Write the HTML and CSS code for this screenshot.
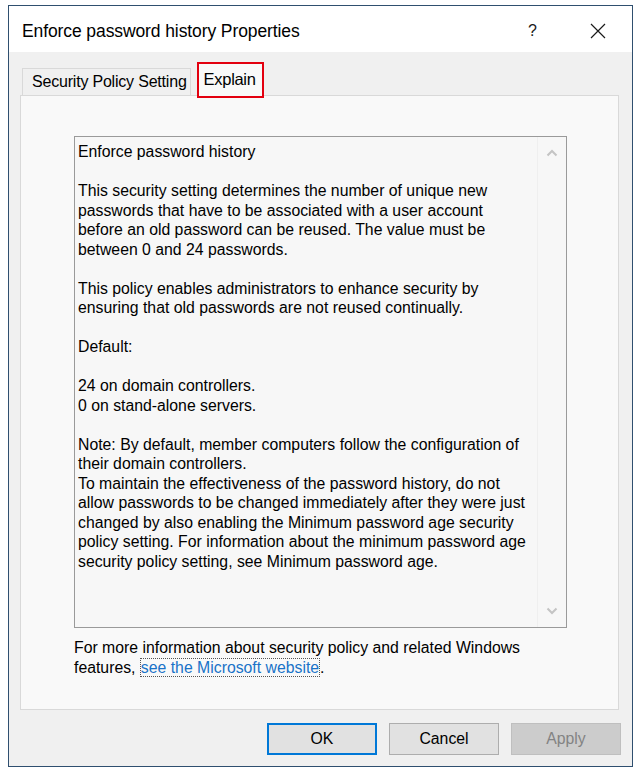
FILE: index.html
```html
<!DOCTYPE html>
<html>
<head>
<meta charset="utf-8">
<title>Enforce password history Properties</title>
<link rel="stylesheet" href="styles.css">
</head>
<body>
<div class="window">
  <div class="titlebar">
    <span class="title">Enforce password history Properties</span>
    <span class="help">?</span>
    <span class="close">
      <svg width="16" height="16" viewBox="0 0 16 16"><path d="M1 1 L15 15 M15 1 L1 15" stroke="#1a1a1a" stroke-width="1.2" fill="none"/></svg>
    </span>
  </div>
  <div class="client">
    <div class="tabstrip">
      <div class="tab">Security Policy Setting</div>
      <div class="tab active">Explain</div>
    </div>
    <div class="panel">
      <div class="textbox">
        <div class="text">
          <p>Enforce password history</p>
          <p>This security setting determines the number of unique new passwords that have to be associated with a user account before an old password can be reused. The value must be between 0 and 24 passwords.</p>
          <p>This policy enables administrators to enhance security by ensuring that old passwords are not reused continually.</p>
          <p>Default:</p>
          <p>24 on domain controllers.<br>0 on stand-alone servers.</p>
          <p>Note: By default, member computers follow the configuration of their domain controllers.<br>To maintain the effectiveness of the password history, do not allow passwords to be changed immediately after they were just changed by also enabling the Minimum password age security policy setting. For information about the minimum password age security policy setting, see Minimum password age.</p>
        </div>
        <div class="scrollbar">
          <svg class="arrow" width="12" height="8" viewBox="0 0 12 8"><path d="M1.5 6.5 L6 2 L10.5 6.5" stroke="#c4c4c4" stroke-width="2" fill="none"/></svg>
          <svg class="arrow" width="12" height="8" viewBox="0 0 12 8"><path d="M1.5 1.5 L6 6 L10.5 1.5" stroke="#c4c4c4" stroke-width="2" fill="none"/></svg>
        </div>
      </div>
      <p class="more">For more information about security policy and related Windows features, <a class="link" href="#">see the Microsoft website</a>.</p>
    </div>
    <div class="buttons">
      <button class="btn default">OK</button>
      <button class="btn">Cancel</button>
      <button class="btn disabled">Apply</button>
    </div>
  </div>
</div>
</body>
</html>
```

FILE: styles.css
```css
html, body {
  margin: 0;
  padding: 0;
  background: #ffffff;
}

body {
  font-family: "Liberation Sans", Arial, sans-serif;
  color: #000;
}

.window {
  margin: 5px 0 0 8px;
  width: 625px;
  height: 762px;
  box-sizing: border-box;
  border: 1px solid #2f4f6f;
  background: #f0f0f0;
  display: flex;
  flex-direction: column;
}

.titlebar {
  height: 46px;
  box-sizing: border-box;
  background: #ffffff;
  display: flex;
  align-items: center;
  padding: 4px 0 0 13px;
  flex: none;
}

.title {
  font-size: 17.5px;
  color: #000;
  flex: 1;
  letter-spacing: -0.1px;
}

.help {
  font-size: 16px;
  color: #1a1a1a;
  width: 20px;
  margin-right: 42px;
}

.close {
  display: flex;
  margin-right: 26px;
}

.client {
  flex: 1;
  display: flex;
  flex-direction: column;
  padding: 10px 13px 0 11px;
}

.tabstrip {
  display: flex;
  align-items: flex-end;
  height: 33px;
  gap: 6px;
  position: relative;
  z-index: 2;
}

.tab {
  height: 27px;
  box-sizing: border-box;
  border: 1px solid #d9d9d9;
  border-bottom: none;
  background: #f0f0f0;
  font-size: 16px;
  display: flex;
  align-items: center;
  padding: 0 3px 0 9px;
  letter-spacing: -0.2px;
  margin-left: 2px;
}

.tab.active {
  height: 36px;
  width: 67px;
  margin-left: 0;
  margin-bottom: -3px;
  border: 2px solid #e3000f;
  background: #f9f9f9;
  padding: 0 0 2px 5px;
  font-size: 16.5px;
  letter-spacing: -0.3px;
}

.panel {
  height: 615px;
  box-sizing: border-box;
  border: 1px solid #d9d9d9;
  background: #f9f9f9;
  padding: 40px 0 0 53px;
  position: relative;
  z-index: 1;
}

.textbox {
  width: 493px;
  height: 492px;
  box-sizing: border-box;
  border: 1px solid #9a9a9a;
  background: #f7f7f7;
  display: flex;
}

.text {
  flex: 1;
  padding: 5px 8px 0 3px;
  font-size: 15.8px;
  line-height: 19.5px;
}

.text p {
  margin: 0 0 19.5px 0;
}

.scrollbar {
  width: 28px;
  border-left: 1px solid #efefef;
  display: flex;
  flex-direction: column;
  align-items: center;
  justify-content: space-between;
  padding: 12px 0 12px 0;
}

.more {
  margin: 10px 0 0 0;
  font-size: 15.8px;
  line-height: 20px;
  width: 470px;
}

.link {
  color: #1a73c8;
  text-decoration: none;
  outline: 1px dotted #555;
  outline-offset: 0;
  margin: 0 1px;
}

.buttons {
  display: flex;
  justify-content: flex-end;
  gap: 12px;
  margin-top: 13px;
  margin-right: -2px;
}

.btn {
  width: 110px;
  height: 32px;
  box-sizing: border-box;
  border: 1px solid #adadad;
  background: #e1e1e1;
  font-family: "Liberation Sans", Arial, sans-serif;
  font-size: 15.8px;
  color: #000;
  padding: 0;
}

.btn.default {
  border: 2px solid #0078d7;
}

.btn.disabled {
  background: #cccccc;
  border-color: #bfbfbf;
  color: #838383;
}
```
